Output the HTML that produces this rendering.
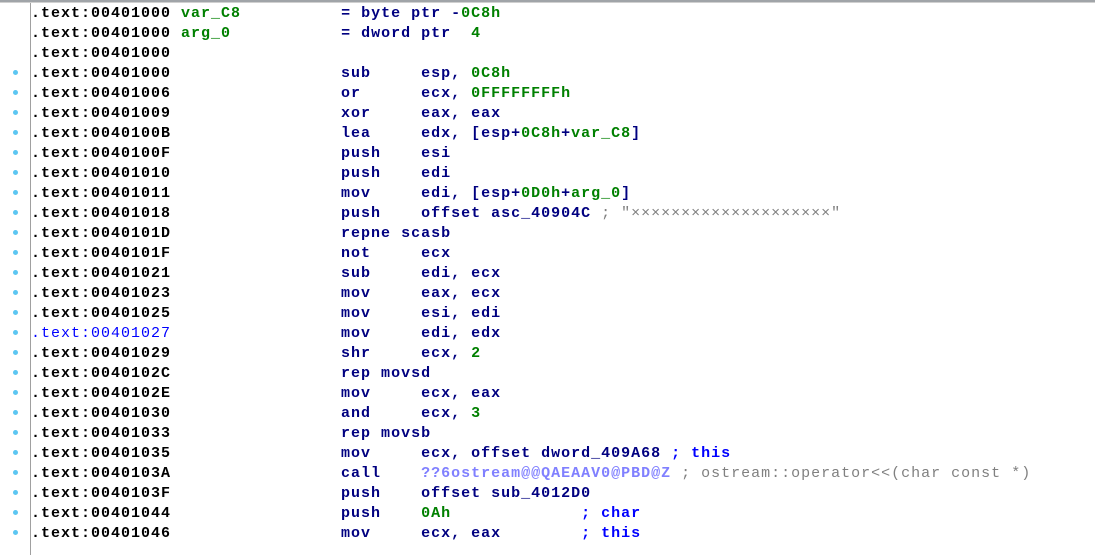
<!DOCTYPE html>
<html><head><meta charset="utf-8"><style>
html,body{margin:0;padding:0;background:#fff;width:1095px;height:555px;overflow:hidden}
.top{position:absolute;left:0;top:0;width:1095px;height:2px;background:#a0a4a8;border-bottom:1px solid #d0d0d0}
.gut{position:absolute;left:0;top:3px;width:30px;height:552px;background:#fff;border-right:1px solid #a0a0a0}
.dot{position:absolute;left:13px;width:5px;height:5px;border-radius:50%;background:#5cc6f2}
pre{position:absolute;left:31px;top:4px;margin:0;font-family:"Liberation Mono",monospace;font-size:15px;font-weight:bold;letter-spacing:1px;line-height:20px;color:#000080}
.a{color:#000}.s{color:#0000ff}.g{color:#008000}.c{color:#808080;font-weight:normal}.p{color:#8080ff}.b{color:#0000ff}
</style></head><body>
<div class="top"></div><div class="gut"></div>
<div class="dot" style="top:70px"></div><div class="dot" style="top:90px"></div><div class="dot" style="top:110px"></div><div class="dot" style="top:130px"></div><div class="dot" style="top:150px"></div><div class="dot" style="top:170px"></div><div class="dot" style="top:190px"></div><div class="dot" style="top:210px"></div><div class="dot" style="top:230px"></div><div class="dot" style="top:250px"></div><div class="dot" style="top:270px"></div><div class="dot" style="top:290px"></div><div class="dot" style="top:310px"></div><div class="dot" style="top:330px"></div><div class="dot" style="top:350px"></div><div class="dot" style="top:370px"></div><div class="dot" style="top:390px"></div><div class="dot" style="top:410px"></div><div class="dot" style="top:430px"></div><div class="dot" style="top:450px"></div><div class="dot" style="top:470px"></div><div class="dot" style="top:490px"></div><div class="dot" style="top:510px"></div><div class="dot" style="top:530px"></div>
<pre><span class="a">.text:00401000</span> <span class="g">var_C8</span>          = byte ptr -<span class="g">0C8h</span>
<span class="a">.text:00401000</span> <span class="g">arg_0</span>           = dword ptr  <span class="g">4</span>
<span class="a">.text:00401000</span>
<span class="a">.text:00401000</span>                 sub     esp, <span class="g">0C8h</span>
<span class="a">.text:00401006</span>                 or      ecx, <span class="g">0FFFFFFFFh</span>
<span class="a">.text:00401009</span>                 xor     eax, eax
<span class="a">.text:0040100B</span>                 lea     edx, [esp+<span class="g">0C8h</span>+<span class="g">var_C8</span>]
<span class="a">.text:0040100F</span>                 push    esi
<span class="a">.text:00401010</span>                 push    edi
<span class="a">.text:00401011</span>                 mov     edi, [esp+<span class="g">0D0h</span>+<span class="g">arg_0</span>]
<span class="a">.text:00401018</span>                 push    offset asc_40904C <span class="c">; "××××××××××××××××××××"</span>
<span class="a">.text:0040101D</span>                 repne scasb
<span class="a">.text:0040101F</span>                 not     ecx
<span class="a">.text:00401021</span>                 sub     edi, ecx
<span class="a">.text:00401023</span>                 mov     eax, ecx
<span class="a">.text:00401025</span>                 mov     esi, edi
<span class="s" style="font-weight:normal">.text:00401027</span>                 mov     edi, edx
<span class="a">.text:00401029</span>                 shr     ecx, <span class="g">2</span>
<span class="a">.text:0040102C</span>                 rep movsd
<span class="a">.text:0040102E</span>                 mov     ecx, eax
<span class="a">.text:00401030</span>                 and     ecx, <span class="g">3</span>
<span class="a">.text:00401033</span>                 rep movsb
<span class="a">.text:00401035</span>                 mov     ecx, offset dword_409A68 <span class="b">; this</span>
<span class="a">.text:0040103A</span>                 call    <span class="p">??6ostream@@QAEAAV0@PBD@Z</span> <span class="c">; ostream::operator&lt;&lt;(char const *)</span>
<span class="a">.text:0040103F</span>                 push    offset sub_4012D0
<span class="a">.text:00401044</span>                 push    <span class="g">0Ah</span>             <span class="b">; char</span>
<span class="a">.text:00401046</span>                 mov     ecx, eax        <span class="b">; this</span>
</pre>
</body></html>
